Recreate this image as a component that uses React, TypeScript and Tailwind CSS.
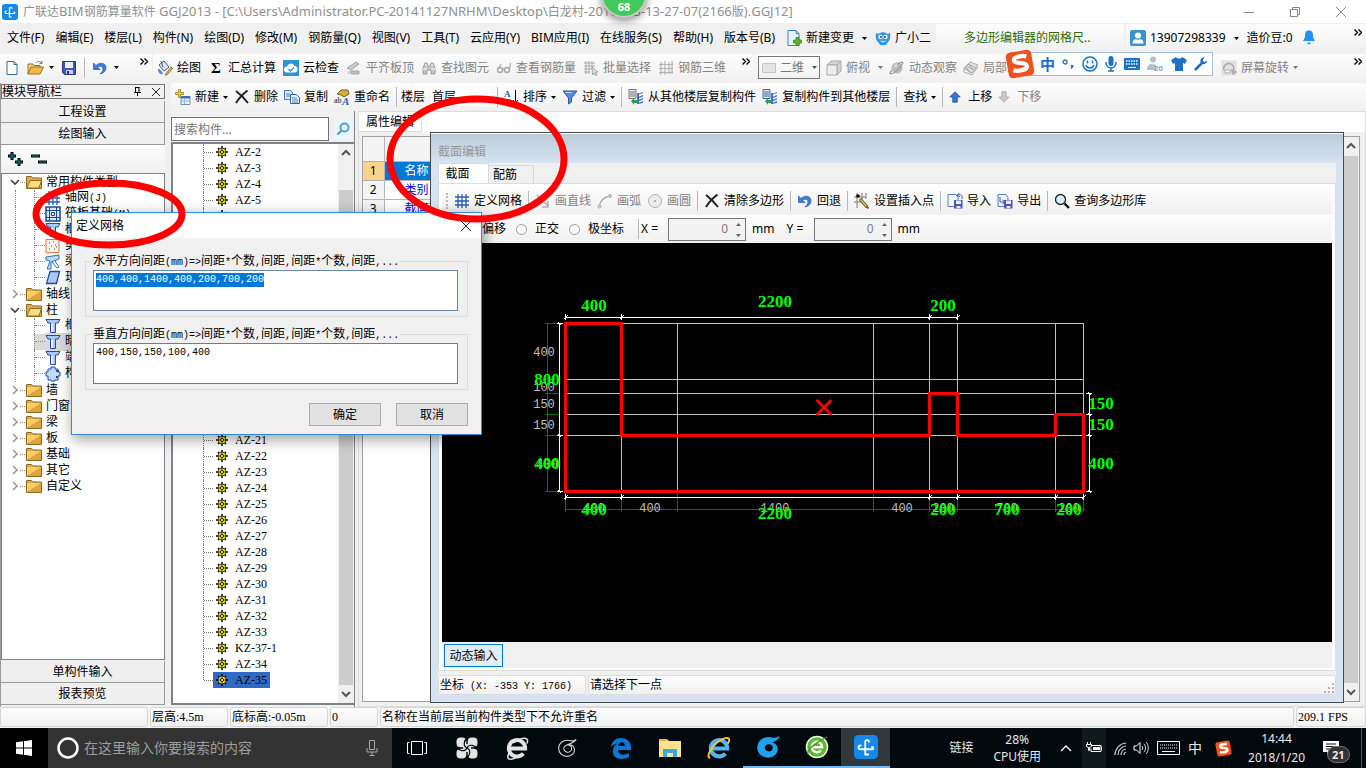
import React, { useEffect, useRef } from "react";

type Kids = { children?: React.ReactNode };

function Svg({ children, c = "h-4 w-4", box = "0 0 16 16" }: Kids & { c?: string; box?: string }) {
  return (
    <svg viewBox={box} className={`${c} shrink-0`} fill="none" aria-hidden="true">
      {children}
    </svg>
  );
}

/* Chinese text with half-width Latin set in a monospace face */
function Half({ text }: { text: string }) {
  return (
    <>
      {text.split(/([\x20-\x7e]+)/).map((part, i) =>
        i % 2 ? (
          <span key={i} className="font-['Liberation_Mono',monospace] text-[10px] whitespace-pre">{part}</span>
        ) : (
          part
        ),
      )}
    </>
  );
}

const Caret = ({ c = "text-black" }: { c?: string }) => (
  <Svg c={`h-[3px] w-[5px] ${c}`} box="0 0 5 3"><path d="M0 0h5L2.500 3z" fill="currentColor" /></Svg>
);
const More = () => (
  <Svg c="h-[7px] w-2" box="0 0 8 7"><path d="M.5.5l3 3-3 3M4.500.5l3 3-3 3" stroke="#000" strokeWidth="1.400" /></Svg>
);
const Sep = () => <span className="h-5 w-px shrink-0 bg-[#b8b8b8]" />;

const NewDoc = () => <Svg><path d="M3 1.500h7l3 3v10H3z" fill="#fff" stroke="#3f6796" /><path d="M10 1.500v3h3" stroke="#3f6796" /></Svg>;
const OpenIcon = () => (
  <Svg c="h-4 w-[18px]" box="0 0 18 16"><path d="M1 14V4h5l1 1.500h6V8" fill="#f6d679" stroke="#9b7429" /><path d="M1 14l3-7h12.500l-3.500 7z" fill="#f0bb4a" stroke="#9b7429" /><path d="M9 3c2-2 4-2 6 0m0-2v2.500h-2.500" stroke="#5b7ca8" /></Svg>
);
const Save = () => <Svg><path d="M1.500 1.500h13v13h-11l-2-2z" fill="#4556b5" stroke="#2c3780" /><path d="M4 2h8v6H4z" fill="#e9eefb" /><path d="M5 10h7v4H5z" fill="#c8cfee" /><path d="M6 11h2v3H6z" fill="#2c3780" /></Svg>;
const Undo = () => <Svg><path d="M1.500 3v6.500H8L5.800 7.300C8 5.500 11 6 11 9c0 2-1.500 3.500-3 5 4-1 6-3 6-6.500C14 3 8 1.500 4 5.500z" fill="#3d7ddc" stroke="#2759ad" strokeWidth=".7" /></Svg>;
const Paint = () => <Svg><path d="M2 5l5-4 5 6-5 4z" fill="#dce8f6" stroke="#365a8c" /><path d="M4 1l2 6" stroke="#365a8c" /><path d="M8 15l6-8 1.500 1.500L10 15z" fill="#e9bb4b" stroke="#7c5e22" strokeWidth=".8" /><path d="M1 9c2 0 4 2 5 5-3 1-5-2-5-5z" fill="#4a81cc" /></Svg>;
const Cloud = () => <Svg><rect width="16" height="16" fill="#2b93dc" /><path d="M4 12.500a3 3 0 010-6 4 4 0 017.500-.5 3.300 3.300 0 01.5 6.500z" fill="#fff" /><path d="M5.500 9l2 2 3.500-3.500" stroke="#2b93dc" strokeWidth="1.400" /></Svg>;
const Roof = () => <Svg><path d="M1 8l9-6 3 2-8 6zM5 11h8v3H5z" fill="#ccc" stroke="#a5a5a5" /><path d="M2 14l2-3M8 11v3M11 11v3" stroke="#a5a5a5" /></Svg>;
const Bino = () => <Svg><path d="M2 14V8l2-5h2l1 3h2l1-3h2l2 5v6h-4v-4H6v4z" fill="#c6c6c6" stroke="#9e9e9e" /><path d="M4 5h2M10 5h2M2 9h4M10 9h4" stroke="#fff" /></Svg>;
const Glasses = () => <Svg><circle cx="4" cy="10" r="2.500" stroke="#aaa" strokeWidth="1.500" /><circle cx="11" cy="10" r="2.500" stroke="#aaa" strokeWidth="1.500" /><path d="M6.500 9h2M2 9l3-5M13.500 9l1-6" stroke="#aaa" strokeWidth="1.300" /></Svg>;
const GridSel = () => <Svg><path d="M1 3h11M1 6h11M1 9h8M1 12h6M3 1v13M6 1v13M9 1v8" stroke="#aaa" /><path d="M9 7l6 5-2.500.3 1.500 2.700-1.500.5-1.300-2.500L9.500 15z" fill="#ddd" stroke="#999" strokeWidth=".8" /></Svg>;
const Rebar = () => <Svg><path d="M1 5c4-2 9 1 14-1M1 9c4-2 9 1 14-1M1 13c4-2 9 1 14-1M3 2v13M7 1v14M11 2v12M14 1v13" stroke="#aaa" /></Svg>;
const Cube = () => <Svg><path d="M1 5l4-4h10l-4 4zM11 5l4-4v10l-4 4z" fill="#d4d4d4" stroke="#aaa" /><path d="M1 5h10v10H1z" fill="#ececec" stroke="#aaa" /></Svg>;
const Orbit = () => <Svg><circle cx="8" cy="8" r="5.500" fill="#bdbdbd" /><path d="M1 14c3 0 9-4 13-11-1-2-4 0-7 3M1 14c0-2 1-3 2-4" stroke="#999" strokeWidth="1.200" /><path d="M5 5l4-1-2 4z" fill="#e3e3e3" /></Svg>;
const Local = () => <Svg><path d="M1 8l6-6 8 3-6 8z" fill="#e2e2e2" stroke="#aaa" /><path d="M3 6l8 4M5 4l8 4M7 13l-4-6M11 10L5 4M9 13l-8-5v4l8 3 6-8" stroke="#aaa" /></Svg>;
const Rotate = () => <Svg><rect x=".5" y=".5" width="15" height="15" fill="#e2e2e2" /><path d="M3 10a5 5 0 119 1M12 14l-1-4 4 2z" stroke="#aaa" strokeWidth="1.500" /><path d="M4 13h5v-3H4z" fill="#fff" stroke="#aaa" /></Svg>;
const NewComp = () => <Svg><path d="M6 7.500h9v8H6z" fill="#e7f0fb" stroke="#6f8fbb" /><path d="M6 7h9v2.500H6z" fill="#3a70c2" /><path d="M7 12h7M9.500 10v5" stroke="#9fb7d8" /><path d="M3.500.5h2v3h3v2h-3v3h-2v-3h-3v-2h3z" fill="#f4d22c" stroke="#98801c" strokeWidth=".8" /></Svg>;
const XIcon = () => <Svg><path d="M2 2c4 3 8 7 12 12M13.500 1.500C9 5 5 9 2 14" stroke="#222" strokeWidth="2" /></Svg>;
const Copy = () => <Svg><path d="M.5 1.500h6l2 2v7h-8z" fill="#dce8f8" stroke="#4c76b0" /><path d="M6.500 5.500h6l3 3v6h-9z" fill="#e8f1fd" stroke="#2f62ab" /><path d="M2 5h4M2 7h4M8 9h5M8 11h6M8 13h6" stroke="#4c86d0" /></Svg>;
const Rename = () => (
  <Svg>
    <path d="M3 5l4-4h7l1 4-5 3-3-2z" fill="#d2b03a" stroke="#7a6318" />
    <text x="0" y="14" fontSize="8" fontFamily="Liberation Serif" fill="#222">ab</text>
    <text x="8" y="15.500" fontSize="11" fontWeight="bold" fontStyle="italic" fontFamily="Liberation Serif" fill="#2a62bd">A</text>
  </Svg>
);
const SortIcon = () => (
  <Svg>
    <text x="1" y="8" fontSize="9" fontWeight="bold" fontFamily="Liberation Serif" fill="#2756a8">A</text>
    <text x="2" y="15.500" fontSize="9" fontWeight="bold" fontFamily="Liberation Serif" fill="#9c3c3c">Z</text>
    <path d="M12.500 1v13M10 11l2.500 3.500L15 11" stroke="#000" />
  </Svg>
);
const Funnel = () => <Svg><path d="M1 2h14L9.500 9v4L6.500 15V9z" fill="#5a8be0" stroke="#2b57a8" /><path d="M3.500 3.500h6" stroke="#c9dcfb" /></Svg>;
const FloorCopy = ({ color = "#777" }: { color?: string }) => (
  <Svg><path d="M1 .5h7v9H1z" fill="#e8e8e8" stroke={color} /><path d="M2 3h5M2 5h5M2 7h5" stroke={color} /><path d="M3 12l3-3v2h3v3H6v2z" fill="#27a34a" /><path d="M10 5l5-2v1l-5 2zM10 8l5-2v1.500l-5 2zM10 11l5-2v1.500l-5 2zM10 14l5-2v2l-5 1z" fill="#3f7fd0" /><path d="M10 4v11" stroke="#2a4f8f" strokeWidth="1.500" /></Svg>
);
const Arrow = ({ down = false }) => (
  <Svg c="h-3 w-3"><path d={down ? "M5 1h6v7h4l-7 7-7-7h4z" : "M5 15h6V8h4L8 1 1 8h4z"} fill={down ? "#c9c9c9" : "#3b72d8"} stroke={down ? "#aaa" : "#234e9f"} /></Svg>
);
const ChangeDoc = () => <Svg><path d="M2 .5h8l3 3v12H2z" fill="#eaf4fd" stroke="#3a82c4" /><path d="M10 .5v3h3" stroke="#3a82c4" /><path d="M10 7.500h3v2.500h2.500v3H13v2.500h-3V13H7.500v-3H10z" fill="#58b832" stroke="#2d7d19" strokeWidth=".7" /></Svg>;
const Mascot = () => <Svg><path d="M1 3l2.500 1C6 1.500 10 1.500 12.500 4L15 3c.5 3 .3 5-.5 7-1 2-3 3-3.500 5H5c-.5-2-2.500-3-3.500-5C.7 8 .5 6 1 3z" fill="#2e95ea" /><circle cx="5.500" cy="7" r="2.200" fill="#fff" /><circle cx="10.500" cy="7" r="2.200" fill="#fff" /><circle cx="6" cy="7" r=".9" fill="#124" /><circle cx="10" cy="7" r=".9" fill="#124" /><path d="M5.500 11c2 1 3 1 5 0" stroke="#fff" /></Svg>;
const Avatar = () => <Svg><rect width="16" height="16" rx="2" fill="#3e92c9" /><circle cx="8" cy="5.500" r="3" fill="#fff" /><path d="M2.500 13.500c0-4 3-5 5.500-3.500 2.500-1.500 5.500-.5 5.500 3.500z" fill="#fff" /></Svg>;
const Bell = () => <Svg><path d="M8 .5c3 0 4 2 4 5 0 2.500 1 3.500 2 5.500H2c1-2 2-3 2-5.500 0-3 1-5 4-5zM6 12.500h4L8 15z" fill="#2490f5" /></Svg>;
const BlueGrid = () => <Svg><path d="M1 4h14M1 8h14M1 12h14M4 1v14M8 1v14M12 1v14" stroke="#2b5db5" strokeWidth="1.300" /></Svg>;
const LineIcon = () => <Svg><path d="M2 2l11 11M13 8v6H7" stroke="#b0b0b0" strokeWidth="1.500" /></Svg>;
const ArcIcon = () => <Svg><path d="M2 14C3 8 7 4 13 3" stroke="#b0b0b0" strokeWidth="1.500" /><circle cx="2.500" cy="13.500" r="1.500" fill="#ddd" stroke="#aaa" /><circle cx="13" cy="3" r="1.500" fill="#ddd" stroke="#aaa" /></Svg>;
const CircleIcon = () => <Svg><circle cx="8" cy="8" r="6.500" fill="#ececec" stroke="#b0b0b0" /><circle cx="8" cy="8" r="1" fill="#999" /></Svg>;
const Insert = () => <Svg><path d="M0 4h12M0 9h9M3 0v15M8 0v8M12 0v6" stroke="#777" /><circle cx="4" cy="3" r="1.800" fill="#000" /><path d="M6 6l7 8" stroke="#333" strokeWidth="3" /><path d="M6.500 6.500l6 7" stroke="#e0c53a" strokeWidth="1.800" /><path d="M12.500 13.500l2 2" stroke="#c33" strokeWidth="2" /></Svg>;
const DiskDoc = ({ out = false }) => <Svg><path d="M1 1.500h8l2 3v9H1z" fill="#eef5fd" stroke="#5b81b5" />{out ? <path d="M3 4v5h4M5.500 7L8 9l-2.500 2" stroke="#2d5da8" /> : <path d="M15 6c1-4-2-5-4-4m1-2l-2 2.500 3 1" stroke="#2d5da8" />}<path d="M7 7h8.500v8.500H7z" fill="#4857b8" /><path d="M9 7.500h5V11H9zM9.500 13h4v2h-4z" fill="#e6eafb" /></Svg>;
const Mag = () => <Svg><circle cx="6.500" cy="6.500" r="5" fill="#d9f0fb" stroke="#222" strokeWidth="1.300" /><path d="M10.500 10.500l4.500 4.500" stroke="#111" strokeWidth="2.400" /></Svg>;
const AppLogo = ({ c = "h-4 w-4" }) => <Svg c={c}><rect width="16" height="16" rx="3" fill="#1589ea" /><path d="M7.500 13V4.500c0-1.500 2.500-1.500 2.500 0M4.500 7C2.500 7 2.500 9.500 4.500 9.500h7.500c1 0 1-1.500 0-1.500M7.500 13h2" stroke="#fff" strokeWidth="1.200" strokeLinecap="round" /></Svg>;
const SogouS = ({ c }: { c: string }) => <Svg c={c} box="0 0 28 28"><g transform="rotate(-10 14 14)"><rect x="2" y="2" width="24" height="24" rx="4" fill="#f1521b" /><path d="M21 8c-3-1.500-12-2-12 1.800C9 14 20 12 20 17c0 4-9 3.500-13 1.800" stroke="#fff" strokeWidth="4" /></g></Svg>;

const Folder = ({ open = false }) => (
  <Svg>
    <path d="M.5 14.500v-12h5l1.500 1.500h8.500v10.500z" fill="#e3ac3e" stroke="#8c6a22" />
    {open ? <path d="M1 14l3-7.500h11.500l-2.500 7.500z" fill="#fbdc83" stroke="#8c6a22" /> : <><path d="M1 5h14v9H1z" fill="#f8d06a" /><path d="M1 14L15 5v9z" fill="#e0a338" /></>}
  </Svg>
);
const Column = () => <Svg><path d="M1 1.500h14l-2 3.500h-2.500v9.500h-5V5H3z" fill="#a8c8f6" stroke="#1f4fa8" /><path d="M7 6v8" stroke="#fff" strokeWidth="1.500" /></Svg>;
const Raft = () => <Svg><rect x="1" y="1" width="14" height="14" fill="#dbe8f8" stroke="#184a8f" strokeWidth="1.500" /><path d="M4.500 1v14M11.500 1v14M1 4.500h14M1 11.500h14M6.500 6.500h3v3h-3z" stroke="#184a8f" /></Svg>;
const Wall = () => <Svg><path d="M1 1.500h13v13H1z" fill="#f5f0ec" stroke="#e07b3a" /><path d="M4 5h1M8 4h1M6 8h1M10 7h1M4 11h1M9 11h1M11 9h1" stroke="#555" /></Svg>;
const Beam = () => <Svg><path d="M1 3l13-2v4l-8 3v7H2l3-8-4-1z" fill="#b8dcf5" stroke="#2a72bb" /><path d="M7 8l5 6 2-1-4-6" stroke="#2a72bb" /></Svg>;
const Slab = () => <Svg><path d="M5 1.500h9.500l-3 12H1.500z" fill="#a9c8f2" stroke="#1b4da5" strokeWidth="1.300" /></Svg>;
const Puzzle = () => <Svg><path d="M3 3h3V1h4v2h3v3h2v4h-2v4h-3v1H6v-1H3v-4H1V6h2z" fill="#c2daf7" stroke="#1b4da5" /><path d="M11 5h3M11 11h2" stroke="#1b4da5" strokeWidth="2" /></Svg>;
const Gear = () => (
  <Svg c="h-3 w-3" box="0 0 12 12"><path d="M6 0v12M0 6h12M2 2l8 8M10 2l-8 8" stroke="#000" strokeWidth="1.500" /><circle cx="6" cy="6" r="4" fill="#f2ea2c" stroke="#222" strokeWidth=".8" /><path d="M6 2v8M2 6h8" stroke="#222" strokeWidth=".8" /><circle cx="6" cy="6" r="1.600" fill="#f2ea2c" stroke="#000" strokeWidth=".8" /></Svg>
);

function Tool({ icon, label, caret, off }: { icon?: React.ReactNode; label?: string; caret?: boolean; off?: boolean }) {
  return (
    <button type="button" className={`flex shrink-0 items-center gap-1 whitespace-nowrap ${off ? "text-[#838383]" : "text-black"}`}>
      {icon}
      {label}
      {caret && <Caret c={off ? "text-[#777]" : "text-black"} />}
    </button>
  );
}

const strip = "rounded-[3px] bg-linear-to-b from-[#fdfdfd] to-[#f0f0f0]";

const menus = ["文件(F)", "编辑(E)", "楼层(L)", "构件(N)", "绘图(D)", "修改(M)", "钢筋量(Q)", "视图(V)", "工具(T)", "云应用(Y)", "BIM应用(I)", "在线服务(S)", "帮助(H)", "版本号(B)"];

function TitleBar() {
  return (
    <header className="flex h-[23px] items-center bg-white pl-[2px] text-[#8f8f8f]">
      <AppLogo />
      <h1 className="ml-[5px] flex-1 truncate text-[13px]">
        <span className="text-[12px]">广联达</span>BIM<span className="text-[12px]">钢筋算量软件</span> GGJ2013 - [C:\Users\Administrator.PC-20141127NRHM\Desktop\<span className="text-[12px]">白龙村</span>-2016-8-3-13-27-07(2166<span className="text-[12px]">版</span>).GGJ12]
      </h1>
      <div className="flex items-center gap-9 pr-5">
        <button type="button" aria-label="最小化"><Svg c="h-[10px] w-[10px]" box="0 0 10 10"><path d="M0 5.500h10" stroke="#888" /></Svg></button>
        <button type="button" aria-label="还原"><Svg c="h-[10px] w-[10px]" box="0 0 10 10"><path d="M.5 2.500h7v7h-7zM2.500 2.500v-2h7v7h-2" stroke="#888" /></Svg></button>
        <button type="button" aria-label="关闭"><Svg c="h-[10px] w-[10px]" box="0 0 10 10"><path d="M0 0l10 10M10 0L0 10" stroke="#888" /></Svg></button>
      </div>
    </header>
  );
}

function MenuBar() {
  return (
    <nav className="flex h-[30px] items-center bg-[#f0f0f0]">
      <div className="flex shrink-0 gap-[11px] pl-[7px]">
        {menus.map((m) => <button type="button" key={m} className="whitespace-nowrap">{m}</button>)}
      </div>
      <div className="ml-[11px] flex shrink-0 items-center gap-2">
        <button type="button" className="flex items-center gap-1 whitespace-nowrap"><ChangeDoc />新建变更<span className="ml-1"><Caret /></span></button>
        <Tool icon={<Mascot />} label="广小二" />
      </div>
      <div className={`ml-auto h-[28px] w-[188px] truncate pt-[6px] pl-7 text-[#2b6a05] ${strip}`}>多边形编辑器的网格尺..</div>
      <div className={`ml-[2px] flex h-[28px] w-[240px] shrink-0 items-center pl-1 ${strip}`}>
        <button type="button" className="flex items-center gap-1"><Avatar />13907298339<span className="ml-1"><Caret /></span></button>
        <span className="mr-2 ml-2 whitespace-nowrap">造价豆:0</span>
        <Bell />
        <span className="mr-1 mb-3 ml-auto"><More /></span>
      </div>
    </nav>
  );
}

function MainToolbar() {
  return (
    <div className="flex h-[30px] items-center gap-px pb-[1px]">
      <div className={`flex h-[28px] w-[152px] shrink-0 items-center gap-[7px] pl-1 ${strip}`}>
        <Tool icon={<NewDoc />} />
        <Tool icon={<OpenIcon />} caret />
        <Tool icon={<Save />} />
        <Sep />
        <button type="button" className="flex items-center gap-[6px]" aria-label="撤销"><Undo /><Caret /></button>
        <span className="mr-1 mb-3 ml-auto"><More /></span>
      </div>
      <div className={`flex h-[28px] w-[601px] shrink-0 items-center gap-[7px] pl-1 ${strip}`}>
        <Tool icon={<Paint />} label="绘图" />
        <Tool icon={<span className="w-4 text-center font-['Liberation_Serif',serif] text-[15px] font-bold">Σ</span>} label="汇总计算" />
        <Tool icon={<Cloud />} label="云检查" />
        <Tool icon={<Roof />} label="平齐板顶" off />
        <Tool icon={<Bino />} label="查找图元" off />
        <Tool icon={<Glasses />} label="查看钢筋量" off />
        <Tool icon={<GridSel />} label="批量选择" off />
        <Tool icon={<Rebar />} label="钢筋三维" off />
        <span className="mr-1 mb-3 ml-auto"><More /></span>
      </div>
      <div className={`flex h-[28px] min-w-0 flex-1 items-center gap-[6px] pl-[3px] ${strip}`}>
        <button type="button" className="flex h-[23px] w-[62px] shrink-0 items-center gap-1 border border-[#777] pl-[3px] text-[#777]">
          <Svg c="h-[10px] w-[14px]" box="0 0 14 10"><path d="M.5.5h13v9H.5z" fill="#e4e4e4" stroke="#c4c4c4" /></Svg>
          二维<span className="ml-1"><Caret c="text-[#555]" /></span>
        </button>
        <button type="button" className="flex items-center gap-1 text-[#838383]"><Cube />俯视<span className="ml-1"><Caret c="text-[#777]" /></span></button>
        <Tool icon={<Orbit />} label="动态观察" off />
        <Tool icon={<Local />} label="局部三维" off />
        <span className="ml-auto"><Tool icon={<Rotate />} label="屏幕旋转" caret off /></span>
        <span className="mr-1 mb-3 ml-[50px]"><More /></span>
      </div>
    </div>
  );
}

function ComponentToolbar() {
  return (
    <div className={`flex h-[28px] items-center gap-[6px] pl-1 ${strip}`}>
      <Tool icon={<NewComp />} label="新建" caret />
      <Tool icon={<XIcon />} label="删除" />
      <Tool icon={<Copy />} label="复制" />
      <Tool icon={<Rename />} label="重命名" />
      <div className="flex items-center gap-1">
        <Sep />
        <label htmlFor="floor">楼层</label>
      </div>
      <div className="relative flex items-center bg-white">
        <select id="floor" className="h-[18px] w-[60px] appearance-none bg-white pl-[1px]"><option>首层</option></select>
        <span className="pointer-events-none absolute right-1"><Caret /></span>
      </div>
      <div className="flex items-center gap-[5px]">
        <Sep />
        <Tool icon={<SortIcon />} label="排序" caret />
      </div>
      <Tool icon={<Funnel />} label="过滤" caret />
      <Sep />
      <Tool icon={<FloorCopy />} label="从其他楼层复制构件" />
      <Tool icon={<FloorCopy color="#3a66b0" />} label="复制构件到其他楼层" />
      <Sep />
      <Tool label="查找" caret />
      <Sep />
      <button type="button" className="flex items-center gap-[7px]"><Arrow />上移</button>
      <button type="button" className="flex items-center gap-[7px] text-[#838383]"><Arrow down />下移</button>
    </div>
  );
}

type Node = { t: string; icon?: React.ReactNode; open?: boolean; sel?: boolean };
const navTree: Node[] = [
  { t: "常用构件类型", open: true },
  { t: "轴网(J)", icon: <BlueGrid /> },
  { t: "筏板基础(M)", icon: <Raft /> },
  { t: "框柱(Z)", icon: <Column /> },
  { t: "剪力墙(Q)", icon: <Wall /> },
  { t: "梁(L)", icon: <Beam /> },
  { t: "现浇板(B)", icon: <Slab /> },
  { t: "轴线" },
  { t: "柱", open: true },
  { t: "框柱(Z)", icon: <Column /> },
  { t: "暗柱(Z)", icon: <Column />, sel: true },
  { t: "端柱(Z)", icon: <Column /> },
  { t: "构造柱(Z)", icon: <Puzzle /> },
  { t: "墙" }, { t: "门窗洞" }, { t: "梁" }, { t: "板" }, { t: "基础" }, { t: "其它" }, { t: "自定义" },
];

function NavPanel() {
  const btn = "h-[22px] w-full shrink-0 border-r border-b border-[#9a9a9a] bg-[#efefef] text-center";
  return (
    <aside className="flex w-[165px] shrink-0 flex-col border-l border-[#9a9a9a]">
      <div className="mt-[1px] mb-[2px] flex h-[15px] items-center border border-[#777] pr-1 leading-3">
        <h2 className="flex-1">模块导航栏</h2>
        <Svg c="mr-[10px] h-[9px] w-[9px]" box="0 0 9 9"><path d="M2.500 0v5M1 5.500h7M6 0v5M2 .5h4.500M4.500 5v4" stroke="#000" /></Svg>
        <Svg c="h-2 w-2" box="0 0 8 8"><path d="M0 0l8 8M8 0L0 8" stroke="#222" /></Svg>
      </div>
      <button type="button" className={btn}>工程设置</button>
      <button type="button" className={btn}>绘图输入</button>
      <div className={`flex h-[28px] shrink-0 items-center gap-2 pl-[6px] ${strip}`}>
        <Svg><path d="M5 1v8M1 5h8M12 7v8M8 11h8" stroke="#000" strokeWidth="3" /><path d="M5 2v6M2 5h6M12 8v6M9 11h6" stroke="#0b8c88" /></Svg>
        <Svg><path d="M0 5h9M7 11h9" stroke="#000" strokeWidth="3" /><path d="M1 5h7M8 11h7" stroke="#0b8c88" /></Svg>
      </div>
      <ul className="min-h-0 flex-1 overflow-hidden border border-[#7d828a] bg-white">
        {navTree.map((n, i) =>
          n.icon ? (
            <li key={i} className="flex h-4 items-center pl-[13px]">
              <span className="h-4 w-[19px] border-l border-dotted border-[#888]" />
              <span className={`h-4 w-[11px] border-l border-dotted border-[#888] ${n.sel ? "bg-[#d9d9d9]" : ""}`}>
                <span className="block h-2 border-b border-dotted border-[#888]" />
              </span>
              <span className={`flex flex-1 items-center gap-1 ${n.sel ? "bg-[#d9d9d9]" : ""}`}>{n.icon}<span><Half text={n.t} /></span></span>
            </li>
          ) : (
            <li key={i} className="flex h-4 items-center pl-2">
              <Svg c="h-[10px] w-[10px]" box="0 0 10 10"><path d={n.open ? "M1 3l4 4 4-4" : "M3 1l4 4-4 4"} stroke={n.open ? "#444" : "#999"} strokeWidth="1.600" /></Svg>
              <span className="mr-[1px] w-[5px] border-b border-dotted border-[#888]" />
              <Folder open={n.open} />
              <span className="ml-1">{n.t}</span>
            </li>
          ),
        )}
      </ul>
      <div className="h-px" />
      <button type="button" className={btn}>单构件输入</button>
      <button type="button" className={btn}>报表预览</button>
      <div className="h-[2px]" />
    </aside>
  );
}

function ScrollBar({ lead }: { lead: string }) {
  return (
    <div className="flex w-4 shrink-0 flex-col items-center bg-[#f0f0f0]">
      <Svg c="my-1 h-[10px] w-[10px]" box="0 0 10 10"><path d="M1 7l4-4 4 4" stroke="#555" strokeWidth="2" /></Svg>
      <div className={lead} />
      <div className="w-[14px] flex-1 bg-[#cdcdcd]" />
      <Svg c="my-1 h-[10px] w-[10px]" box="0 0 10 10"><path d="M1 3l4 4 4-4" stroke="#555" strokeWidth="2" /></Svg>
    </div>
  );
}

const components = [
  ...[2, 3, 4, 5, 6, 7, 8, 9, 10, 11, 12, 13, 14, 15, 16, 17, 18, 19, 21, 22, 23, 24, 25, 26, 27, 28, 29, 30, 31, 32, 33].map((n) => `AZ-${n}`),
  "KZ-37-1", "AZ-34", "AZ-35",
];

function ComponentPanel() {
  return (
    <section className="flex w-[184px] shrink-0 flex-col border-r border-[#7d828a] pt-[6px]">
      <div className="flex items-center gap-1">
        <input type="search" aria-label="搜索构件" placeholder="搜索构件..." className="h-6 w-[158px] rounded-none border border-[#707070] bg-white pl-[2px] placeholder-[#777] outline-none" />
        <button type="button" aria-label="搜索" className="flex h-5 w-5 items-center justify-center bg-[#edf5fb]">
          <Svg c="h-[14px] w-[14px]" box="0 0 14 14"><circle cx="8.500" cy="5.500" r="4" stroke="#4da3dc" strokeWidth="2" /><path d="M5.500 8.500l-4 4" stroke="#4da3dc" strokeWidth="2.400" /></Svg>
        </button>
      </div>
      <div className="mt-px mb-[2px] flex min-h-0 flex-1 border-2 border-r-0 border-[#7d828a] bg-white">
        <ul className="min-w-0 flex-1 overflow-hidden">
          {components.map((c, i) => {
            const last = i === components.length - 1;
            return (
              <li key={c} className="flex h-4 items-center pl-[30px]">
                <span className={`${last ? "h-2 self-start" : "h-4"} border-l border-dotted border-[#777]`} />
                <span className="w-[9px] border-b border-dotted border-[#777]" />
                <span className={`flex h-4 items-center gap-[7px] pr-[3px] pl-[3px] font-['Liberation_Serif',serif] text-[12px] ${last ? "bg-[#316ac5]" : ""}`}><Gear />{c}</span>
              </li>
            );
          })}
        </ul>
        <ScrollBar lead="h-7" />
      </div>
    </section>
  );
}

function PropertyPanel() {
  const rows = ["名称", "类别", "截面形状"];
  return (
    <section className="flex min-w-0 flex-1 flex-col border border-[#dcdcdc] bg-[#f0f0f0]">
      <div className="bg-white"><h2 className="h-5 w-[63px] border-r border-b border-[#dcdcdc] pl-[7px] leading-5">属性编辑</h2></div>
      <div className="mt-1 mr-[5px] mb-1 ml-[3px] flex min-h-0 flex-1 border border-[#a0a0a0] bg-white">
        <table className="h-min flex-1 border-collapse">
          <thead>
            <tr className="h-[24px] border-b border-[#b5b5b5] bg-[#f4f4f4]">
              <th className="w-[21px] border-r border-[#b5b5b5]"></th>
              <th></th>
            </tr>
          </thead>
          <tbody>
            {rows.map((r, i) => (
              <tr key={r} className="h-[19px] border-b border-[#b5b5b5]">
                <td className={`border-r border-[#b5b5b5] text-center ${i ? "bg-[#f4f4f4]" : "bg-[#fbd28b]"}`}>{i + 1}</td>
                <td className={`pl-5 ${i ? "text-[#0000e8]" : "bg-[#0078d7] text-white"}`}>{r}</td>
              </tr>
            ))}
          </tbody>
        </table>
        <ScrollBar lead="h-px" />
      </div>
    </section>
  );
}

const XS = [565, 621, 677, 873, 929, 957, 1055, 1083];
const YS = [323, 379, 393, 414, 435, 491];

function Drawing() {
  const green: [number, number, string][] = [
    [594, 306, "400"], [775, 302, "2200"], [943, 306, "200"], [547, 380, "800"], [547, 464, "400"],
    [594, 510, "400"], [775, 514, "2200"], [943, 510, "200"], [1007, 510, "700"], [1069, 510, "200"],
    [1101, 404, "150"], [1101, 425, "150"], [1101, 464, "400"],
  ];
  const gray: [number, number, string][] = [
    [544, 352, "400"], [544, 387, "100"], [544, 404, "150"], [544, 425, "150"], [547, 464, "400"],
    [594, 508, "400"], [650, 508, "400"], [775, 508, "1400"], [902, 508, "400"], [943, 508, "200"], [1007, 508, "700"], [1069, 508, "200"],
  ];
  return (
    <svg viewBox="442 243 890 399" className="min-h-0 w-full flex-1 bg-black" role="img" aria-label="截面图">
      <g shapeRendering="crispEdges" fill="none">
        <g stroke="#c0c0c0">
          {XS.map((x) => <path key={x} d={`M${x}.5 323V491`} />)}
          {YS.map((y) => <path key={y} d={`M565 ${y}.5H1083`} />)}
        </g>
        <g stroke="#007800">
          <path d="M547.5 323V491M565 509.5H1085" />
          {XS.map((x) => <path key={x} d={`M${x}.5 493V512`} />)}
          {YS.map((y) => <path key={y} d={`M545 ${y}.5H560`} />)}
        </g>
      </g>
      {gray.map(([x, y, t], i) => <text key={i} x={x} y={y + 4} textAnchor="middle" fontSize="12" fontFamily="Liberation Mono" fill="#c0c0c0">{t}</text>)}
      <g stroke="#fff" fill="none" shapeRendering="crispEdges">
        <path d="M565 317.5H958M565 497.5H1084M559.5 323V492M1089.500 393V492" />
        {[565, 621, 929, 957].map((x) => <path key={x} d={`M${x}.5 314v6M${x - 1} 319l4-4`} />)}
        {[565, 621, 929, 957, 1055, 1083].map((x) => <path key={x} d={`M${x}.5 494v6M${x - 1} 499l4-4`} />)}
        {[323, 435, 491].map((y) => <path key={y} d={`M557 ${y}.5h6M558 ${y - 1}l3 3`} />)}
        {[393, 414, 435, 491].map((y) => <path key={y} d={`M1086 ${y}.5h6M1088 ${y - 1}l3 3`} />)}
      </g>
      <path d="M565.5 323.5H621.5V435.5H929.5V393.5H957.5V435.5H1055.500V414.5H1083.500V491.5H565.5z" stroke="#f00" strokeWidth="3" fill="none" />
      <path d="M816.500 400l15 15M831.500 400l-15 15" stroke="#f00" strokeWidth="2.500" />
      {green.map(([x, y, t], i) => <text key={i} x={x} y={y + 5} textAnchor="middle" fontSize="17" fontWeight="bold" fontFamily="Liberation Serif" fill="#0f0">{t}</text>)}
    </svg>
  );
}

function Spin({ id, label }: { id: string; label: string }) {
  return (
    <div className="flex items-center gap-[6px]">
      <label htmlFor={id} className="w-[21px] whitespace-nowrap">{label}</label>
      <div className="flex h-[23px] w-[78px] items-center border border-[#777] bg-[#f2f2f2] pr-1">
        <input id={id} defaultValue="0" disabled className="w-full min-w-0 bg-transparent pr-2 text-right text-[#808080]" />
        <Svg c="h-[15px] w-[5px]" box="0 0 5 15"><path d="M0 4h5L2.500 1zM0 12h5l-2.500 3z" fill="#666" /></Svg>
      </div>
      <span>mm</span>
    </div>
  );
}

function SectionEditor() {
  return (
    <section className="absolute top-[132px] right-[22px] bottom-[65px] left-[430px] flex flex-col border border-[#444a52] bg-[#d6e3f1] px-[7px] pb-[7px]">
      <h2 className="-mx-[7px] h-[30px] shrink-0 border-t border-white bg-linear-to-b from-[#bccbda] to-[#d6e3f1] pt-[10px] pl-[7px] text-[#979797]">截面编辑</h2>
      <div className="flex min-h-0 flex-1 flex-col bg-[#f0f0f0]">
        <div className="flex h-5 shrink-0 items-end" role="tablist">
          <button type="button" role="tab" className="h-5 w-[51px] border border-b-0 border-[#d9d9d9] bg-white pr-3">截面</button>
          <button type="button" role="tab" className="h-[18px] w-[45px] border border-b-0 border-l-0 border-[#d9d9d9] pr-3">配筋</button>
        </div>
        <div className="flex min-h-0 flex-1 flex-col border border-[#dcdcdc] bg-white px-[3px] pt-[3px] pb-[2px]">
          <div className={`flex h-[28px] shrink-0 items-center gap-[6px] pl-1 ${strip}`}>
            <span className="h-4 border-l-2 border-dotted border-[#bbb]" />
            <Tool icon={<BlueGrid />} label="定义网格" />
            <Sep />
            <Tool icon={<LineIcon />} label="画直线" off />
            <Tool icon={<ArcIcon />} label="画弧" off />
            <Tool icon={<CircleIcon />} label="画圆" off />
            <Sep />
            <Tool icon={<XIcon />} label="清除多边形" />
            <Sep />
            <Tool icon={<Undo />} label="回退" />
            <Sep />
            <Tool icon={<Insert />} label="设置插入点" />
            <Sep />
            <Tool icon={<DiskDoc />} label="导入" />
            <Tool icon={<DiskDoc out />} label="导出" />
            <Sep />
            <Tool icon={<Mag />} label="查询多边形库" />
          </div>
          <div className={`flex h-[28px] shrink-0 items-center pl-[9px] ${strip}`}>
            {["不偏移", "正交", "极坐标"].map((t, i) => (
              <label key={t} className="mr-[10px] flex items-center gap-2 whitespace-nowrap">
                <input type="radio" name="offset" defaultChecked={i === 0} className="h-[11px] w-[11px] appearance-none rounded-full border border-[#999] bg-white" />
                {t}
              </label>
            ))}
            <span className="ml-1 flex items-center gap-[2px]"><Sep /><Spin id="dx" label="X =" /></span>
            <span className="ml-[12px]"><Spin id="dy" label="Y =" /></span>
          </div>
          <Drawing />
          <div className="h-[26px] shrink-0 bg-[#f0f0f0] pt-[2px] pl-[2px]">
            <button type="button" className="h-[23px] w-[59px] border border-[#0078d7] bg-[#e1edf7]">动态输入</button>
          </div>
        </div>
        <div className="mt-1 flex h-5 shrink-0 gap-[2px]">
          <div className={`w-[148px] border border-[#dcdcdc] pl-px leading-[18px] ${strip}`}><Half text="坐标 (X: -353 Y: 1766)" /></div>
          <div className={`flex flex-1 items-end justify-between border border-[#dcdcdc] pl-px leading-[18px] ${strip}`}>
            <span>请选择下一点</span>
            <Svg c="h-3 w-3" box="0 0 12 12"><path d="M9 1h2v2H9zM5 5h2v2H5zM9 5h2v2H9zM1 9h2v2H1zM5 9h2v2H5zM9 9h2v2H9z" fill="#b5b5b5" /></Svg>
          </div>
        </div>
      </div>
    </section>
  );
}

function GridDialog() {
  const first = useRef<HTMLTextAreaElement>(null);
  useEffect(() => {
    first.current?.focus();
    first.current?.select();
  }, []);
  const area = "block h-[41px] w-full resize-none border bg-white px-[2px] pt-[2px] font-['Liberation_Mono',monospace] text-[10px] leading-[14px] outline-none selection:bg-[#0078d7] selection:text-white";
  const btn = "h-[23px] w-[72px] border border-[#adadad] bg-[#e1e1e1]";
  const field = "relative border border-[#dcdcdc] pt-2 pr-[9px] pb-[5px] pl-[7px]";
  const legend = "absolute -top-2 left-[6px] h-[14px] bg-[#f0f0f0] px-px leading-[14px] whitespace-nowrap";
  return (
    <div role="dialog" aria-label="定义网格" className="absolute top-[212px] left-[71px] w-[411px] border border-[#2f8ce6] bg-[#f0f0f0] shadow-[2px_4px_14px_rgba(0,0,0,0.4)]">
      <div className="flex h-[25px] items-center justify-between bg-white pr-[10px] pl-1">
        <h2>定义网格</h2>
        <button type="button" aria-label="关闭"><Svg c="h-[10px] w-[10px]" box="0 0 10 10"><path d="M0 0l10 10M10 0L0 10" stroke="#222" /></Svg></button>
      </div>
      <div className="px-[13px] pt-[23px] pb-2">
        <div className={field}>
          <label htmlFor="hgap" className={legend}><Half text="水平方向间距(mm)=>间距*个数,间距,间距*个数,间距,..." /></label>
          <textarea id="hgap" ref={first} defaultValue="400,400,1400,400,200,700,200" className={`${area} border-[#6a87a3]`} />
        </div>
        <div className={`mt-[17px] ${field}`}>
          <label htmlFor="vgap" className={legend}><Half text="垂直方向间距(mm)=>间距*个数,间距,间距*个数,间距,..." /></label>
          <textarea id="vgap" defaultValue="400,150,150,100,400" className={`${area} border-[#7a7a7a]`} />
        </div>
        <div className="mt-[13px] flex justify-end gap-[15px]">
          <button type="button" className={btn}>确定</button>
          <button type="button" className={btn}>取消</button>
        </div>
      </div>
    </div>
  );
}

function ImeBar() {
  return (
    <div className="absolute top-[52px] left-[1010px] flex h-6 w-[203px] items-center justify-between border border-[#a9c0d8] bg-[#fbfdff] pr-1 pl-[29px] text-[#1c71c5]">
      <div className="absolute -top-[4px] -left-[6px]"><SogouS c="h-[30px] w-[30px]" /></div>
      <span className="text-[15px] font-bold">中</span>
      <Svg c="h-3 w-3" box="0 0 12 12"><circle cx="3" cy="4" r="2" stroke="currentColor" strokeWidth="1.300" /><path d="M9 7h2.500c0 2-1 3.500-2.500 4z" fill="currentColor" /></Svg>
      <Svg><circle cx="8" cy="8" r="7" stroke="currentColor" strokeWidth="1.500" /><path d="M5.500 4.500v3M10.500 4.500v3M4 9c1 4 7 4 8 0" stroke="currentColor" strokeWidth="1.400" /></Svg>
      <Svg c="h-4 w-3" box="0 0 12 16"><rect x="3.500" width="5" height="10" rx="2.500" fill="currentColor" /><path d="M1 6c0 8 10 8 10 0M6 12v3M3 15h6" stroke="currentColor" strokeWidth="1.500" /></Svg>
      <Svg><rect y="2" width="16" height="12" rx="1" fill="currentColor" /><path d="M2 5h12M2 8h12" stroke="#fff" strokeWidth="1.500" strokeDasharray="1.500 1" /><path d="M4 11.500h8" stroke="#fff" /></Svg>
      <Svg><circle cx="6" cy="3.500" r="3" fill="#b4bfd2" /><path d="M0 14c0-6 4-7 9-5v5z" fill="#b4bfd2" /><text x="7" y="14.500" fontSize="8" fontWeight="bold" fontFamily="Liberation Sans" fill="#8d9cb8">20</text></Svg>
      <Svg><path d="M5 1c1 2 5 2 6 0l5 3-2 4-2-1v8H4V7L2 8 0 4z" fill="currentColor" /></Svg>
      <Svg c="h-[14px] w-[14px]"><path d="M2 14l7-7" stroke="currentColor" strokeWidth="3" strokeLinecap="round" /><path d="M15 4l-3 2-2-2 2-3.500C9 0 6.500 2.500 7.500 6c1 3.500 7 3 7.500-2z" fill="currentColor" /></Svg>
    </div>
  );
}

function StatusBar() {
  const cell = `border border-[#d4d4d4] pl-px leading-[18px] whitespace-nowrap ${strip}`;
  return (
    <footer className="flex h-[21px] shrink-0 gap-[2px] bg-[#f4f4f4] pb-px font-['Liberation_Serif','Noto_Sans_CJK_SC',serif]">
      <div className={`${cell} w-[148px]`} />
      <div className={`${cell} w-[78px]`}>层高:4.5m</div>
      <div className={`${cell} w-[98px]`}>底标高:-0.05m</div>
      <div className={`${cell} w-[48px]`}>0</div>
      <div className={`${cell} flex-1`}>名称在当前层当前构件类型下不允许重名</div>
      <div className={`${cell} w-[70px]`}>209.1 FPS</div>
    </footer>
  );
}

const eShape = "M5 12.500h14.500A7.500 7.500 0 1017.800 17";
const swirl = "M23 2c-3 2.500-5 1.500-8 1C8 1.500 2 6 2 12.500 2 18 6.500 22 12 22s9.500-4 9-8.500c-.5-4-4-6-7-5 2.500.7 4 2.500 3.500 5-.5 2.500-3 4-5.500 3.500-3-.5-4.500-3.500-3.500-6 1.500-4 10-3 14.500-9z";

function Taskbar() {
  const a = "flex h-full w-[50px] items-center justify-center";
  const b = "flex h-full w-[49px] items-center justify-center";
  return (
    <footer className="flex h-10 shrink-0 items-center bg-[#01090c] text-[#e8e8e8]">
      <button type="button" aria-label="开始" className="flex h-full w-12 items-center justify-center bg-black"><Svg><path d="M0 2.300L7 1.300v6.200H0zM8 1.200L16 0v7.500H8zM0 8.500h7v6.200L0 13.700zM8 8.500h8V16l-8-1.200z" fill="#fff" /></Svg></button>
      <div className="flex h-full w-[344px] items-center bg-[#333] pr-3 pl-2">
        <Svg c="h-6 w-6" box="0 0 24 24"><circle cx="12" cy="12" r="9.500" stroke="#fff" strokeWidth="2.500" /></Svg>
        <input aria-label="在这里输入你要搜索的内容" placeholder="在这里输入你要搜索的内容" className="ml-1 min-w-0 flex-1 bg-transparent text-[14px] placeholder-[#9c9c9c] outline-none" />
        <Svg c="h-4 w-4"><path d="M5.500.5h5v9h-5zM3 8v4h10V8M8 12v3M5.500 15.500h5" stroke="#a8a8a8" /></Svg>
      </div>
      <button type="button" aria-label="任务视图" className={a}><Svg c="h-4 w-5" box="0 0 20 16"><path d="M4.500 1.500h11v13h-11zM2.500 2.500h-2v11h2M17.500 2.500h2v11h-2" stroke="#fff" /></Svg></button>
      <button type="button" aria-label="风车" className={a}>
        <Svg c="h-6 w-6" box="0 0 24 24">
          <rect x="1.500" y="1.500" width="9.800" height="9.800" rx="4" fill="#e4e4e4" /><rect x="12.700" y="1.500" width="9.800" height="9.800" rx="4" fill="#e4e4e4" />
          <rect x="1.500" y="12.700" width="9.800" height="9.800" rx="4" fill="#e4e4e4" /><rect x="12.700" y="12.700" width="9.800" height="9.800" rx="4" fill="#e4e4e4" />
          <circle cx="12" cy="12" r="4" fill="#e4e4e4" />
          {[0, 90, 180, 270].map((r) => <path key={r} d="M12 12C7.500 10 9 4 13 1.500" transform={`rotate(${r} 12 12)`} stroke="#01090c" strokeWidth="1.200" />)}
        </Svg>
      </button>
      <button type="button" aria-label="浏览器" className={a}><Svg c="h-6 w-6" box="1 1 22 22"><path d={eShape} stroke="#e4e4e4" strokeWidth="3.600" /><path d="M5 16c-5 9 4 7 10 2M9 7c7-5 15-6 12 1" stroke="#e4e4e4" strokeWidth="1.400" /></Svg></button>
      <button type="button" aria-label="广联达" className={a}><Svg c="h-5 w-5" box="0 0 24 24"><path d={swirl} stroke="#d8d8d8" strokeWidth="1.300" /></Svg></button>
      <div className="w-1" />
      <button type="button" aria-label="Edge" className={b}><Svg c="h-6 w-6" box="0 0 24 24"><path d="M2 11C3 5 7 2 12 2c6 0 10 4 10 9v3H9c0 5 6 6 11 3v4c-7 4-17 2-16-6 0-4 2-6 4.500-7.500C5.500 8 3.500 9 2 11zM9 10h7c0-5-6-5-7 0z" fill="#0b78d8" fillRule="evenodd" /></Svg></button>
      <button type="button" aria-label="文件资源管理器" className={b}><Svg c="h-6 w-6" box="0 0 24 24"><path d="M1 3h8l2 2h12v16H1z" fill="#fbe28b" /><path d="M1 3h8v2H1z" fill="#e8b93e" /><path d="M5 21v-8h14v8h-4v-4H9v4z" fill="#3da7dc" /></Svg></button>
      <button type="button" aria-label="IE" className={b}><Svg c="h-6 w-6" box="1 1 22 22"><path d={eShape} stroke="#58b3ee" strokeWidth="3.800" /><path d="M4 21C-1 21 6 9 13 5c6-3.500 11-3 7 3" stroke="#f2cb35" strokeWidth="1.800" /></Svg></button>
      <button type="button" aria-label="广联达G" className={`${b} border-b-2 border-[#76b9ed]`}><Svg c="h-6 w-6" box="0 0 24 24"><path d={swirl} fill="#22a0f0" stroke="#22a0f0" strokeWidth="1.500" /></Svg></button>
      <button type="button" aria-label="360浏览器" className={`${b} border-b-2 border-[#76b9ed]`}><Svg c="h-6 w-6" box="0 0 24 24"><circle cx="12" cy="12" r="10.500" fill="#5cb82e" stroke="#e9f6df" strokeWidth="1.500" /><path d={eShape} stroke="#fff" strokeWidth="3.400" transform="translate(3.500 3.500) scale(.7)" /><path d="M3 19C1 14 14 6 22 2" stroke="#3f9f22" strokeWidth="1.300" /></Svg></button>
      <button type="button" aria-label="钢筋算量" className={`${b} border-b-2 border-[#76b9ed] bg-[#31393c]`}><AppLogo c="h-6 w-6" /></button>
      <div className="ml-auto flex h-full items-center">
        <span className="mr-5">链接</span>
        <div className="mr-[19px] text-center leading-[17px]">28%<br />CPU使用</div>
        <Svg c="mr-[10px] h-2 w-3" box="0 0 12 8"><path d="M1 7l5-5 5 5" stroke="#fff" strokeWidth="1.300" /></Svg>
        <span className="mr-[7px] flex h-full w-6 items-center justify-center bg-[#10191c]"><Svg><path d="M6 5.500h9v6H5v-3" stroke="#fff" /><path d="M7 7h7v3H7zM15 7h1v3h-1z" fill="#fff" /><path d="M1.500 2v2M4.500 2v2M.5 4.500h5v2l-2 1v3h-1v-3l-2-1z" stroke="#fff" /></Svg></span>
        <Svg c="mr-[6px] h-[14px] w-[14px]" box="0 0 14 14"><path d="M2 14A12 12 0 0113 2M5 14a9 9 0 018-9M8 14a6 6 0 015-6M11 14a3 3 0 012-3" stroke="#ccc" strokeWidth="1.200" /></Svg>
        <Svg c="mr-2 h-4 w-4"><path d="M1 6h2.500L7 2.500v11L3.500 10H1z" stroke="#fff" /><path d="M9 6c1 1 1 3 0 4M11 4c2 2 2 6 0 8M13 2c3 3 3 9 0 12" stroke="#ddd" /></Svg>
        <Svg c="mr-2 h-[14px] w-[23px]" box="0 0 23 14"><path d="M.5.5h22v13H.5z" stroke="#fff" /><path d="M3 4h17M3 7h17" stroke="#fff" strokeDasharray="1 1" /><path d="M5 10.500h13" stroke="#fff" /></Svg>
        <span className="mr-[13px] text-[14px]">中</span>
        <SogouS c="mr-4 h-[17px] w-[17px]" />
        <div className="text-center leading-[19px]">14:44<br />2018/1/20</div>
        <span className="relative ml-[18px] flex h-full w-[38px] items-center">
          <Svg><path d="M0 1h16v11H7l-3 3v-3H0z" fill="#fff" /><path d="M3 4h10M3 6.500h10M3 9h7" stroke="#111" /></Svg>
          <span className="absolute top-[18px] left-1 rounded-full border border-[#777] bg-[#333] px-1 text-[11px] leading-[15px] font-bold">21</span>
        </span>
        <span className="mr-1 h-full w-px bg-[#555]" />
      </div>
    </footer>
  );
}

export default function App() {
  return (
    <div className="relative flex h-screen flex-col overflow-hidden bg-[#f0f0f0] font-['Noto_Sans','Noto_Sans_CJK_SC',sans-serif] text-[12px] leading-4 text-black">
      <TitleBar />
      <MenuBar />
      <MainToolbar />
      <main className="flex min-h-0 flex-1">
        <NavPanel />
        <div className="ml-[6px] flex min-w-0 flex-1 flex-col">
          <ComponentToolbar />
          <div className="flex min-h-0 flex-1 gap-[3px]">
            <ComponentPanel />
            <PropertyPanel />
          </div>
        </div>
      </main>
      <StatusBar />
      <Taskbar />
      <SectionEditor />
      <GridDialog />
      <ImeBar />
      <div className="absolute -top-[28px] left-[601px] flex h-[46px] w-[46px] items-end justify-center rounded-full border-2 border-[#c5c9c5] bg-[#43c95c] pb-[1px] text-[11px] font-bold text-white shadow-[0_3px_8px_rgba(0,0,0,0.45)]">68</div>
      <svg className="pointer-events-none absolute top-0 left-0 h-[260px] w-[600px]" viewBox="0 0 600 260" fill="none" aria-hidden="true">
        <ellipse cx="477" cy="159" rx="87" ry="60" stroke="#f00" strokeWidth="7" />
        <ellipse cx="109" cy="214" rx="73" ry="31" stroke="#f00" strokeWidth="7" />
      </svg>
    </div>
  );
}
